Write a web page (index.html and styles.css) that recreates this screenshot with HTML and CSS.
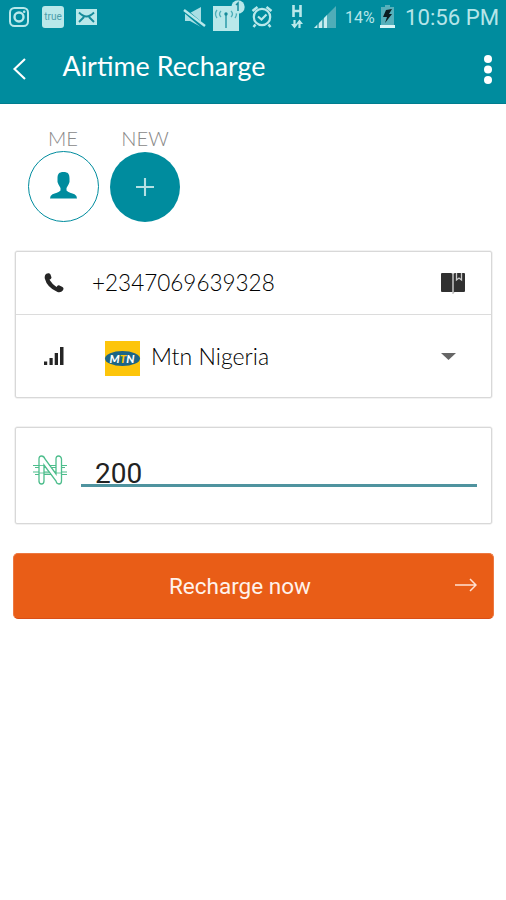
FILE: index.html
```html
<!DOCTYPE html>
<html lang="en">
<head>
<meta charset="utf-8">
<title>Airtime Recharge</title>
<link rel="stylesheet" href="styles.css">
</head>
<body>
<header class="top">
  <div class="status">
    <svg class="instagram" width="22" height="22" viewBox="0 0 22 22" fill="none" stroke="#b9e8ea" stroke-width="2"><rect x="2" y="2" width="18" height="18" rx="4.5"/><circle cx="11" cy="11" r="4.5" stroke-width="2.4"/><circle cx="16.2" cy="5.8" r=".6" stroke-width="1.4"/></svg>
    <span class="truecaller">true</span>
    <svg class="mail" width="21" height="16" viewBox="0 0 21 16"><path d="M0 0h21v16H0z" fill="#b9e8ea"/><path d="M3 3.500q4 4 7.500 4t7.500-4M3 13l5-5M18 13l-5-5" fill="none" stroke="#168b9a" stroke-width="1.900"/></svg>
    <svg class="mute" width="24" height="22" viewBox="0 0 24 22"><path d="M2 7h5l11-6v20L7 15H2z" fill="#a9dfe4"/><path d="M1 4l20 17" stroke="#008c9e" stroke-width="4.500"/><path d="M1 4l21 16" stroke="#b9e8ea" stroke-width="2.400"/></svg>
    <svg class="hotspot" width="32" height="32" viewBox="0 0 32 32"><path d="M0 6h26v25H0z" fill="#b9e8ea"/><path d="M13 14v14" stroke="#4faeb9" stroke-width="2"/><circle cx="13" cy="14" r="1.700" fill="#168b9a"/><path d="M8 11q-3 3 0 6M4 10q-3 4 0 8M18 11q3 3 0 6M22 10q3 4 0 8" fill="none" stroke="#4faeb9" stroke-width="1.300"/><circle cx="25" cy="7" r="6.700" fill="#b9e8ea"/><path d="M23 5l2-2v8" fill="none" stroke="#168b9a" stroke-width="1.500"/></svg>
    <svg class="alarm" width="22" height="24" viewBox="0 0 22 24" fill="none" stroke="#b9e8ea" stroke-width="2.200"><circle cx="11" cy="13" r="8.200"/><path d="M1.500 7l5-4M20.500 7l-5-4M4.500 20.500l-2 2.500M17.500 20.500l2 2.500" stroke-width="2.500"/><path d="M7 12.500l3.500 3 5-5"/></svg>
    <svg class="hspa" width="14" height="25" viewBox="0 0 14 25" fill="none" stroke="#b9e8ea" stroke-width="2.600"><path d="M3.500 1v12M10.500 1v12M3.500 7h7"/><path d="M4.500 16v7M9.500 24v-7" stroke-width="2.200"/><path d="M1 20h7l-3.500 4.500zM6 20h7l-3.500-4.500z" fill="#b9e8ea" stroke="none"/></svg>
    <svg class="bars" width="22" height="22" viewBox="0 0 22 22"><path d="M0 22L22 0v22z" fill="#4fadb8"/><path d="M0 22l3-3v3zM5 22v-5l3-3v8zM10 22V12l3-3v13z" fill="#c8edf0"/></svg>
    <span class="percent">14%</span>
    <svg class="battery" width="15" height="23" viewBox="0 0 15 23"><path d="M5 0h5v2h4v18H1V2h4z" fill="#56b0bb"/><path d="M0 20h15v3H0z" fill="#d7f5f6"/><path d="M6 5l6-1-3 5h3L5 18l2-6H3z" fill="#0b1c20"/></svg>
    <span class="clock">10:56 PM</span>
  </div>
  <div class="bar">
    <svg class="back" width="14" height="22" viewBox="0 0 14 22"><path d="M13 1L2.500 11 13 21" fill="none" stroke="#fff" stroke-width="2.100"/></svg>
    <h1>Airtime Recharge</h1>
    <svg class="more" width="8" height="30" viewBox="0 0 8 30" fill="#fff"><circle cx="4" cy="4" r="4"/><circle cx="4" cy="14.500" r="4"/><circle cx="4" cy="25" r="4"/></svg>
  </div>
</header>
<main>
  <section class="contacts">
    <div class="contact">
      <span class="label">ME</span>
      <div class="avatar me"><svg width="27" height="27" viewBox="0 0 27 27" fill="#008c9e"><path d="M13.500 0C9 0 7.500 2 7.500 6.500Q7 10 8.500 12.500L10.500 16V18.500C9 20.500 5 21 2.500 22.200Q0 23.500 0 26.500H27Q27 23.500 24.500 22.200C22 21 18 20.500 16.500 18.500V16L18.500 12.500Q20 10 19.500 6.500C19.500 2 18 0 13.500 0z"/></svg></div>
    </div>
    <div class="contact">
      <span class="label">NEW</span>
      <div class="avatar add"><svg width="18" height="18" viewBox="0 0 18 18"><path d="M9 0v18M0 9h18" stroke="#b5e0e4" stroke-width="2.100"/></svg></div>
    </div>
  </section>
  <section class="card details">
    <div class="row phone">
      <svg class="handset" width="20" height="20" viewBox="0 0 20 20"><path d="M1 2.500C2-.2 5.500-.5 6.500 1.500L7.500 4.500Q7.500 6 5.500 6.800Q8 11 12.500 14Q13.500 11.800 15 12.200L18.500 14Q20.200 15 19 17.200Q17 20 13.500 19Q3 14.500 .8 5.500Q.5 4 1 2.500z" fill="#252525"/></svg>
      <span class="number">+2347069639328</span>
      <svg class="book" width="24" height="22" viewBox="0 0 24 22"><path d="M1 1h9q1.500 0 1.500 1.500V20Q11 20 9 20H1Q0 20 0 19V2Q0 1 1 1zM14 1h9q1 0 1 1v17q0 1-1 1h-9q-1.500 0-1.500 1V2.500Q12.500 1 14 1z" fill="#303030"/><path d="M12 1v21" stroke="#aaa"/><path d="M15.500 1v7l2.500-2 2.500 2V1" fill="none" stroke="#ccc" stroke-width="1.300"/></svg>
    </div>
    <div class="row network">
      <svg class="signal" width="20" height="19" viewBox="0 0 20 19" fill="#252525"><rect y="14.500" width="3.200" height="3.500"/><rect x="5.500" y="11" width="3.200" height="7"/><rect x="10.700" y="6" width="3.300" height="12"/><rect x="16" width="3.500" height="18"/></svg>
      <div class="mtn"><span>M<b>T</b>N</span></div>
      <span class="provider">Mtn Nigeria</span>
      <svg class="caret" width="15" height="7" viewBox="0 0 15 7"><path d="M0 0h15L7.500 7z" fill="#666"/></svg>
    </div>
  </section>
  <section class="card amount">
    <svg class="naira" width="36" height="30" viewBox="0 0 36 30" fill="none" stroke="#4dbd8c" stroke-width="1.300"><path d="M1 10.500h34M3 12.500h30M1 17h34M3 19.500h32" stroke-width="1.200"/><path d="M7 27V4Q7 1 9.500 1T13 4l11 15V4q0-3 2.500-3T29.500 4v22q0 3-2.500 3T24 26L12 10v16q0 3-2.500 3T7 26z" fill="#fff"/><path d="M7 10.500h5M7 18h5M17 10.500h7M12 18h5M24 18h5" stroke-width=".8"/></svg>
    <div class="field">200</div>
  </section>
  <button class="recharge"><span>Recharge now</span><svg width="22" height="14" viewBox="0 0 22 14" fill="none" stroke="#ffe1d2" stroke-width="1.500"><path d="M0 7h21M15 1l6 6-6 6"/></svg></button>
</main>
</body>
</html>
```
FILE: styles.css
```css
* { box-sizing: border-box; }
body { margin: 0; width: 506px; height: 900px; background: #fff; font-family: Lato, sans-serif; overflow: hidden; }
svg { display: block; flex: none; }
span, h1 { white-space: nowrap; }
.top { height: 104px; background: #008c9e; border-bottom: 1px solid #007d8e; }
.status { height: 36px; display: flex; align-items: flex-start; color: #b5e5e9; font-family: Roboto, sans-serif; }
.status > * { flex: none; }
.instagram { margin: 6px 0 0 8px; }
.truecaller { width: 22px; height: 22px; margin: 6px 0 0 12px; border-radius: 3px; background: #b9e8ea; color: #4b9eaa; font-size: 10px; line-height: 21px; text-align: center; }
.mail { margin: 9px 0 0 12px; }
.mute { margin: 6px 0 0 86px; }
.hotspot { margin-left: 6px; }
.alarm { margin: 4px 0 0 6px; }
.hspa { margin: 4px 0 0 17px; }
.bars { margin: 6px 0 0 10px; }
.percent { width: 32px; margin: 8px 0 0 9px; font-size: 16px; line-height: 20px; }
.battery { margin: 5px 0 0 3px; }
.clock { margin: 3px 0 0 10px; font-size: 22.200px; line-height: 29px; }
.bar { height: 67px; display: flex; align-items: flex-start; }
.back { margin: 22px 0 0 12px; }
h1 { margin: 13px 0 0 36.500px; font-size: 26.900px; line-height: 34px; font-weight: 400; color: #fff; }
.more { margin: 19px 14px 0 auto; }
main { padding: 24px 12px 0 15px; }
.contacts { display: flex; gap: 12px; padding-left: 13px; height: 122px; }
.contact { width: 70px; display: flex; flex-direction: column; align-items: center; }
.label { height: 23px; font-size: 20.200px; line-height: 20px; font-weight: 300; color: #888; }
.avatar { width: 70px; height: 70px; flex: none; border-radius: 50%; display: flex; align-items: center; justify-content: center; }
.me { width: 71px; height: 71px; border: 1.500px solid #008c9e; }
.me svg { margin-top: -2px; }
.add { margin-top: 1px; background: #008c9e; }
.add svg { margin-top: -1px; }
.card { width: 477px; border: 1.500px solid #d8d8d8; border-radius: 2px; box-shadow: 0 0 0 .5px #e6e6e6; }
.details { height: 147px; margin-top: 1px; }
.row { display: flex; align-items: center; }
.phone { height: 63px; border-bottom: 1px solid #dcdcdc; padding: 0 26px 0 28px; }
.number { margin: -1px 0 0 28px; font-size: 22.500px; line-height: 30px; font-weight: 300; color: #000; }
.book { margin: -1px 0 0 auto; }
.network { height: 82px; padding: 4px 35px 0 28px; }
.signal { margin-top: -4px; }
.mtn { width: 35px; height: 35px; margin-left: 40.500px; background: #fdc50b; display: flex; align-items: center; }
.mtn span { width: 35px; height: 15px; border-radius: 50%; background: #1d6585; color: #fff; font: italic 900 11.500px/15px Lato, sans-serif; text-align: center; }
.mtn b { color: #fdc50b; font-weight: 900; }
.provider { margin: -5px 0 0 11.500px; font-size: 23.100px; font-weight: 300; color: #000; }
.caret { margin: -3px 0 0 auto; }
.amount { height: 97px; margin-top: 29px; display: flex; padding: 27px 14px 0 16px; }
.field { flex: 1; height: 32px; margin-left: 13px; padding-left: 14px; border-bottom: 3px solid #4f939f; font: 400 28px/37px Roboto, sans-serif; color: #222; }
.recharge { width: 481px; height: 66px; margin: 29px 0 0 -2px; padding: 0 16px 0 155px; border: 1px solid #ed7841; border-bottom-color: #d94e18; border-radius: 5px; background: #e95d17; color: #fff2eb; display: flex; align-items: center; justify-content: space-between; font: 400 22.500px Roboto, sans-serif; }
.recharge svg { margin-top: -2px; }
```
